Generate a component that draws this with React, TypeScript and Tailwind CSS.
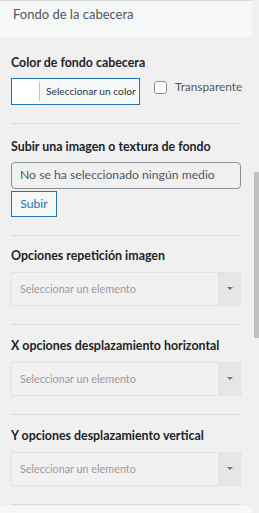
const font = "font-['Lato','Noto_Sans',sans-serif]"

// Selector de lista (estilo select2)
function SelectBox() {
  return (
    <div className="flex h-[34px] w-[230px] border border-[#e2e2e2] bg-[#f1f1f1]">
      <div className="flex flex-1 items-center pl-2 text-[10.8px] text-[#9a9a9a]">
        Seleccionar un elemento
      </div>
      <div className="flex w-[22px] items-center justify-center border-l border-[#e2e2e2] bg-[#e6e6e6]">
        <svg width="6" height="4" viewBox="0 0 6 4">
          <path d="M0 0 L6 0 L3 3 Z" fill="#777" />
        </svg>
      </div>
    </div>
  )
}

function Divider() {
  return <div className="h-px w-[230px] bg-[#dcdcde]" />
}

function Label({ children }: { children: React.ReactNode }) {
  return <div className="text-[12.4px] font-bold leading-[18px] text-[#1d2327]">{children}</div>
}

export default function App() {
  return (
    <div className={`${font} flex h-[513px] w-[259px] items-start overflow-hidden bg-[#f0f0f1]`}>
      <div className="w-[252px] shrink-0">
        {/* Cabecera de la sección */}
        <div className="h-[37px] border-t border-[#dcdcde] bg-[#f6f7f7] pl-[13px] pt-[4px] text-[13px] leading-[18px] text-[#50575e]">
          Fondo de la cabecera
        </div>

        <div className="pl-[11px]">
          {/* Color */}
          <div className="pt-[17px]">
            <Label>Color de fondo cabecera</Label>
          </div>
          <div className="mt-[6px] flex items-start">
            <div className="flex h-[27px] w-[129px] border border-[#2271b1] bg-[#f6f7f7]">
              <div className="w-[27px] bg-white" />
              <div className="my-[3px] w-px bg-[#c3c4c7]" />
              <div className="flex flex-1 items-center whitespace-nowrap pl-[6px] text-[10.2px] text-[#2c3338]">
                Seleccionar un color
              </div>
            </div>
            <div className="ml-[14px] mt-[3px] flex items-start">
              <div className="h-[13px] w-[13px] rounded-[3px] border border-[#8c8f94] bg-white" />
              <span className="ml-[8px] -mt-[3px] text-[11.8px] leading-[18px] text-[#50575e]">Transparente</span>
            </div>
          </div>
          <div className="mt-[18px]">
            <Divider />
          </div>

          {/* Imagen */}
          <div className="mt-[14px]">
            <Label>Subir una imagen o textura de fondo</Label>
          </div>
          <div className="mt-[6px] flex h-[27px] w-[230px] items-center rounded-[4px] border border-[#8c8f94] pl-[8px] text-[12.2px] text-[#50575e]">
            No se ha seleccionado ningún medio
          </div>
          <div className="mt-[2px] flex h-[26px] w-[46px] items-center justify-center border border-[#2271b1] bg-[#f6f7f7] text-[12.2px] text-[#2271b1]">
            Subir
          </div>
          <div className="mt-[18px]">
            <Divider />
          </div>

          {/* Repetición */}
          <div className="mt-[11px]">
            <Label>Opciones repetición imagen</Label>
          </div>
          <div className="mt-[7px]">
            <SelectBox />
          </div>
          <div className="mt-[18px]">
            <Divider />
          </div>

          <div className="mt-[12px]">
            <Label>X opciones desplazamiento horizontal</Label>
          </div>
          <div className="mt-[7px]">
            <SelectBox />
          </div>
          <div className="mt-[18px]">
            <Divider />
          </div>

          <div className="mt-[12px]">
            <Label>Y opciones desplazamiento vertical</Label>
          </div>
          <div className="mt-[7px]">
            <SelectBox />
          </div>
          <div className="mt-[18px]">
            <Divider />
          </div>
        </div>
        <div className="mt-[1px] h-[10px] bg-[#f6f7f7]" />
      </div>

      {/* Barra de desplazamiento */}
      <div className="w-[7px]">
        <div className="ml-[2px] mt-[172px] h-[166px] w-[5px] bg-[#c1c1c1]" />
      </div>
    </div>
  )
}
